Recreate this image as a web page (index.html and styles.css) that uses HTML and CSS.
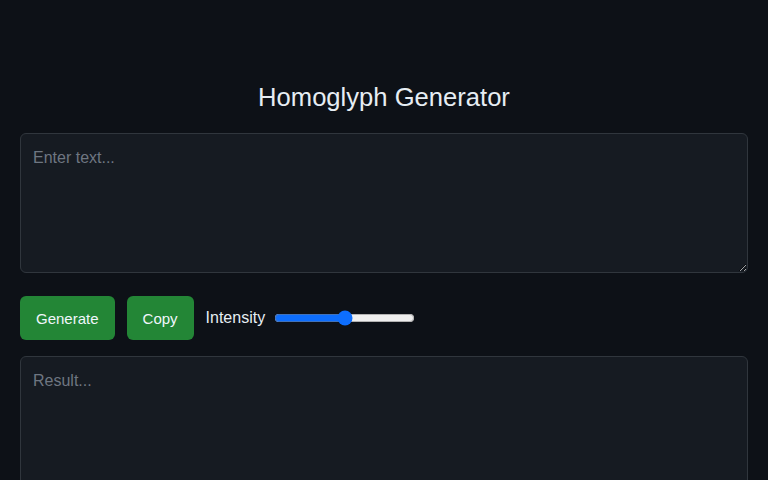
FILE: index.html
```html
<!DOCTYPE html>
<html lang="en">
<head>
<meta charset="utf-8">
<title>Homoglyph Generator</title>
<link rel="stylesheet" href="styles.css">
</head>
<body>
<main class="container">
  <h1 class="title">Homoglyph Generator</h1>
  <textarea class="box" placeholder="Enter text..."></textarea>
  <div class="controls">
    <button class="btn">Generate</button>
    <button class="btn">Copy</button>
    <label class="label" for="intensity">Intensity</label>
    <input class="slider" id="intensity" type="range" min="0" max="100" value="50">
  </div>
  <textarea class="box" placeholder="Result..." readonly></textarea>
</main>
</body>
</html>
```
FILE: styles.css
```css
html, body {
  margin: 0;
  padding: 0;
  background: #0d1117;
  color: #e6edf3;
  font-family: "Liberation Sans", Arial, sans-serif;
}
.container {
  padding: 0 20px;
}
.title {
  margin: 0;
  padding-top: 81px;
  height: 52px;
  box-sizing: content-box;
  font-size: 25.6px;
  font-weight: 400;
  line-height: 32px;
  text-align: center;
  color: #e6edf3;
}
.box {
  display: block;
  box-sizing: border-box;
  width: 100%;
  height: 140px;
  padding: 12px;
  background: #161b22;
  color: #e6edf3;
  border: 1px solid #30363d;
  border-radius: 6px;
  font-family: "Liberation Sans", Arial, sans-serif;
  font-size: 16px;
  line-height: 24px;
  resize: vertical;
  outline: none;
}
.box::placeholder {
  color: #6e7681;
}
.controls {
  display: flex;
  align-items: center;
  gap: 12px;
  margin: 23px 0 16px;
}
.btn {
  height: 44px;
  padding: 0 16px;
  background: #238636;
  color: #f0f6fc;
  border: none;
  border-radius: 6px;
  font-family: "Liberation Sans", Arial, sans-serif;
  font-size: 15px;
}
.label {
  font-size: 16px;
  color: #e6edf3;
}
.slider {
  width: 141px;
  margin: 0 0 0 -3px;
  accent-color: #0d6efd;
}
```
